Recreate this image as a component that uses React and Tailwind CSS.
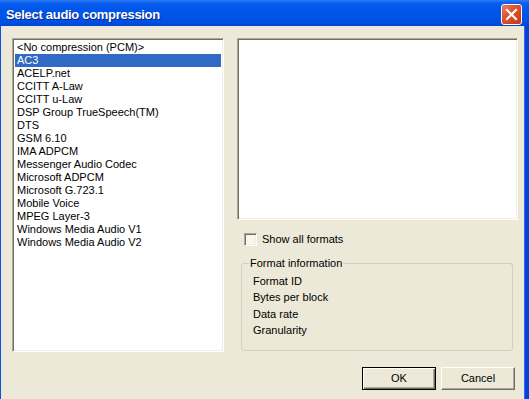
import React from "react";

const items = [
  "<No compression (PCM)>",
  "AC3",
  "ACELP.net",
  "CCITT A-Law",
  "CCITT u-Law",
  "DSP Group TrueSpeech(TM)",
  "DTS",
  "GSM 6.10",
  "IMA ADPCM",
  "Messenger Audio Codec",
  "Microsoft ADPCM",
  "Microsoft G.723.1",
  "Mobile Voice",
  "MPEG Layer-3",
  "Windows Media Audio V1",
  "Windows Media Audio V2",
];

const sunken =
  "border border-t-[#ACA899] border-l-[#ACA899] border-b-white border-r-white shadow-[inset_1px_1px_0_#716F64,inset_-1px_-1px_0_#F1EFE2]";

function CloseButton() {
  return (
    <div className="w-[21px] h-[21px] rounded-[3px] border border-white bg-[linear-gradient(135deg,#E9866A_0%,#E0532F_40%,#C93A14_100%)] flex items-center justify-center shadow-[inset_0_0_1px_#7A1C05]">
      <svg width="13" height="13" viewBox="0 0 13 13">
        <path d="M2 2 L11 11 M11 2 L2 11" stroke="white" strokeWidth="2.2" strokeLinecap="square" />
      </svg>
    </div>
  );
}

function Button({ children, primary }) {
  return (
    <div
      className={
        "w-[74px] h-[23px] flex items-center justify-center bg-[#ECE9D8] text-black " +
        (primary
          ? "border border-black shadow-[inset_1px_1px_0_#FFFFFF,inset_-1px_-1px_0_#716F64,inset_-2px_-2px_0_#ACA899]"
          : "border border-t-white border-l-white border-b-[#716F64] border-r-[#716F64] shadow-[inset_-1px_-1px_0_#ACA899]")
      }
    >
      {children}
    </div>
  );
}

export default function App() {
  return (
    <div
      className="w-[529px] h-[399px] flex flex-col overflow-hidden text-[11px] text-black"
      style={{ fontFamily: '"Liberation Sans", Arial, sans-serif' }}
    >
      {/* title bar */}
      <div className="h-[26px] shrink-0 flex items-center justify-between pl-[6px] pr-[7px] bg-[linear-gradient(to_bottom,#2C7BF5_0%,#0A5EEE_12%,#0057EA_30%,#0054E5_65%,#0050E0_85%,#0045D4_100%)]">
        <span className="text-white font-bold text-[13px] tracking-[-0.3px] pt-[4px] [text-shadow:1px_1px_0_#0A2A8A]">
          Select audio compression
        </span>
        <div className="pt-[3px]">
          <CloseButton />
        </div>
      </div>

      {/* body */}
      <div className="flex-1 flex flex-col bg-[#ECE9D8] border-l border-l-[#0A52E6] border-r-4 border-r-[#0842D6] shadow-[inset_-1px_0_0_#2A6BEB]">
        <div className="flex pt-[12px] pl-[11px]">
          {/* list box */}
          <div className={"w-[212px] h-[314px] bg-white p-[2px] " + sunken}>
            {items.map((it, i) => (
              <div
                key={it}
                className={
                  "h-[13px] leading-[13px] pl-[2px] whitespace-nowrap " +
                  (i === 1 ? "bg-[#316AC5] text-white" : "text-black")
                }
              >
                {it}
              </div>
            ))}
          </div>

          {/* right column */}
          <div className="ml-[13px] w-[281px] flex flex-col">
            <div className={"h-[182px] bg-white " + sunken} />

            <div className="flex items-center mt-[13px] ml-[7px] h-[13px]">
              <div className="w-[13px] h-[13px] bg-[#F7F6F0] border border-t-[#ACA899] border-l-[#ACA899] border-b-white border-r-white shadow-[inset_1px_1px_0_#716F64,inset_-1px_-1px_0_#F1EFE2]" />
              <span className="ml-[5px] leading-[13px]">Show all formats</span>
            </div>

            <div className="relative mt-[17px] ml-[4px] mr-[5px] h-[88px] border border-[#D0D0BF] rounded-[3px] pl-[11px] pt-[9px]">
              <span className="absolute -top-[7px] left-[7px] px-[1px] leading-[13px] bg-[#ECE9D8]">
                Format information
              </span>
              <div className="leading-[16.33px]">Format ID</div>
              <div className="leading-[16.33px]">Bytes per block</div>
              <div className="leading-[16.33px]">Data rate</div>
              <div className="leading-[16.33px]">Granularity</div>
            </div>
          </div>
        </div>

        {/* buttons */}
        <div className="flex justify-end gap-[5px] mt-[15px] pr-[10px]">
          <Button primary>OK</Button>
          <Button>Cancel</Button>
        </div>
      </div>
    </div>
  );
}
